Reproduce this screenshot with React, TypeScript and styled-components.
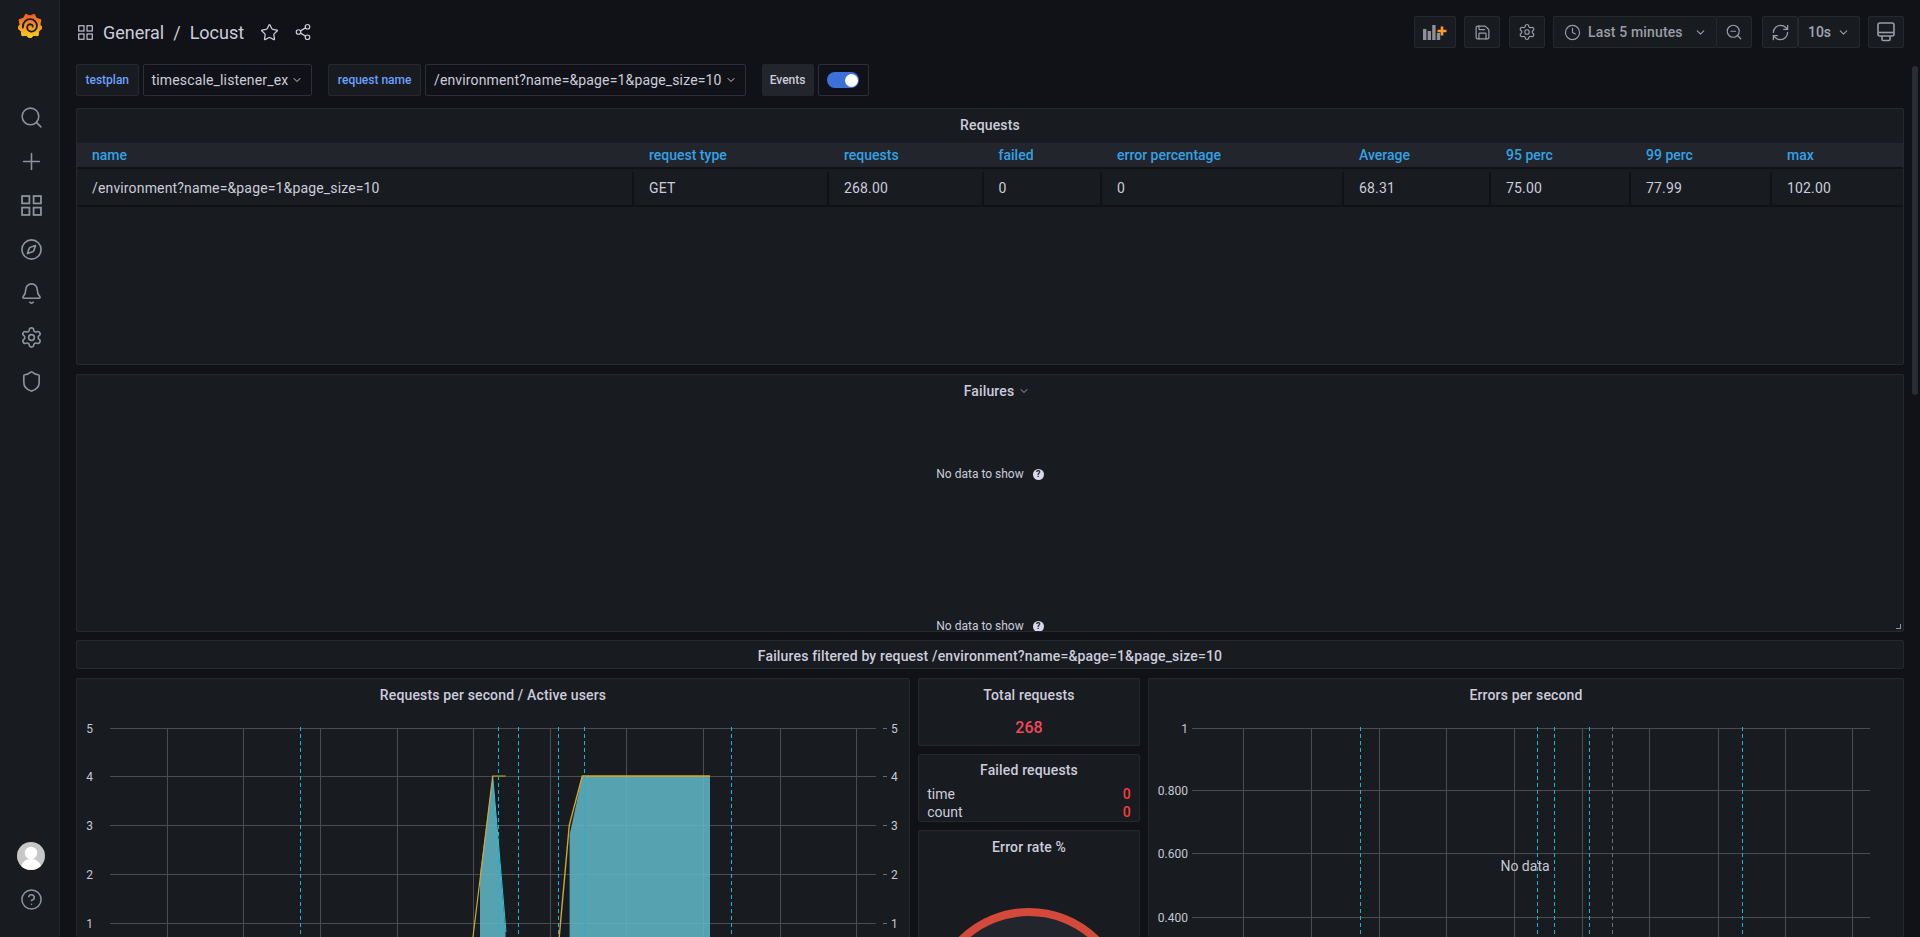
import React from "react";
import styled, { createGlobalStyle } from "styled-components";
import {
  Search, Plus, Compass, Bell, Settings, Shield, CircleHelp, Star, Share2,
  Clock, ZoomOut, RefreshCw, Save, ChevronDown,
} from "lucide-react";

const Global = createGlobalStyle`
  html, body { margin: 0; height: 100%; overflow: hidden; background: #111217; }
  body { font-family: Roboto, "Liberation Sans", sans-serif; color: #ccccdc; font-size: 14px; }
  #root { height: 100%; }
`;

const Shell = styled.div`
  position: relative; display: flex; height: 937px; overflow: hidden; background: #111217;
`;
const Sidebar = styled.nav`
  width: 60px; flex: none; box-sizing: border-box; background: #181b1f;
  border-right: 1px solid #25282d; display: flex; flex-direction: column; align-items: center;
  padding-left: 3px; color: #8e939b;
`;
const LogoSlot = styled.div`
  height: 95px; padding-top: 12px; margin-left: -2px; box-sizing: border-box; display: flex; justify-content: center;
`;
const NavIcons = styled.div`
  display: flex; flex-direction: column; align-items: center;
`;
const NavItem = styled.div`
  height: 44px; width: 44px; display: flex; align-items: center; justify-content: center;
`;
const Spacer = styled.div` flex: 1; `;
const Avatar = styled.div`
  width: 28px; height: 28px; border-radius: 50%; background: #c7c7c7; overflow: hidden; margin-bottom: 17px;
`;
const HelpSlot = styled.div`
  height: 24px; margin-bottom: 26px; display: flex; align-items: center;
`;
const Main = styled.main`
  flex: 1; min-width: 0; box-sizing: border-box; padding: 16px 16px 0; display: flex; flex-direction: column;
`;
const TopBar = styled.header`
  height: 32px; flex: none; display: flex; align-items: center; justify-content: space-between; margin-bottom: 16px;
`;
const Crumbs = styled.div`
  display: flex; align-items: center; padding-left: 2px; font-size: 18px; color: #ccccdc;
`;
const CrumbIcon = styled.span`
  display: flex; margin-right: 10px; color: #ccccdc;
`;
const CrumbSlash = styled.span` margin: 0 9px; `;
const TitleAction = styled.span`
  display: flex; margin-left: 16px; color: #ccccdc;
  & + & { margin-left: 15px; }
`;
const Toolbar = styled.div` display: flex; align-items: center; `;
const ToolButton = styled.div<{ $w: number; $gap?: number }>`
  width: ${p => p.$w}px; margin-left: ${p => p.$gap ?? 9}px; height: 32px; box-sizing: border-box;
  background: #181b1f; border: 1px solid #25282d; border-radius: 2px; color: #9a9da6;
  display: flex; align-items: center; justify-content: center; font-weight: 500; font-size: 14px;
`;
const TimeButton = styled(ToolButton)`
  justify-content: flex-start; padding-left: 10px; border-right: none; border-radius: 2px 0 0 2px;
`;
const TimeLabel = styled.span` margin: 0 11px 0 7px; letter-spacing: .15px; `;
const RefreshLabel = styled.span` color: #9fa7b3; margin-right: 6px; font-size: 14px; `;
const VarRow = styled.div`
  height: 32px; flex: none; display: flex; align-items: stretch; margin-bottom: 12px;
`;
const VarLabel = styled.div`
  box-sizing: border-box; padding: 0 8.5px; margin-left: 16px; display: flex; align-items: center;
  background: #181b1f; border: 1px solid #25282d; border-radius: 2px; color: #6e9fff;
  font-size: 12px; font-weight: 500; margin-right: 4px;
  &:first-child { margin-left: 0; }
`;
const VarSelect = styled.div`
  box-sizing: border-box; padding: 0 8px; display: flex; align-items: center; gap: 3px; letter-spacing: .15px;
  background: #111217; border: 1px solid #2c2f35; border-radius: 2px; color: #ccccdc; font-size: 14px;
`;
const EventsLabel = styled.div`
  width: 52px; margin-left: 16px; margin-right: 4px; display: flex; align-items: center; justify-content: center;
  background: #22252b; border-radius: 2px; font-size: 12px; font-weight: 500; color: #ccccdc;
`;
const SwitchBox = styled.div`
  width: 51px; box-sizing: border-box; border: 1px solid #2c2f35; border-radius: 2px;
  display: flex; align-items: center; justify-content: center;
`;
const Track = styled.div`
  width: 32px; height: 16px; border-radius: 8px; background: #3d71d9; display: flex; align-items: center;
  justify-content: flex-end; padding-right: 1px; box-sizing: border-box;
`;
const Knob = styled.div` width: 13px; height: 13px; border-radius: 50%; background: #fff; `;
const Panel = styled.section<{ $h?: number; $mb?: number }>`
  position: relative; box-sizing: border-box; background: #181b1f; border: 1px solid #25282d; border-radius: 2px;
  ${p => (p.$h ? `height: ${p.$h}px;` : "")}
  ${p => (p.$mb ? `margin-bottom: ${p.$mb}px;` : "")}
  display: flex; flex-direction: column; overflow: hidden; flex: none;
`;
const PanelTitle = styled.h2<{ $h?: number; $shift?: number; $drop?: number }>`
  margin: 0; height: ${p => p.$h ?? 31}px; flex: none; display: flex; align-items: center; justify-content: center;
  gap: 4px; font-size: 14px; font-weight: 500; color: #ccccdc; letter-spacing: .15px; box-sizing: border-box;
  padding-left: ${p => p.$shift ?? 0}px; padding-bottom: ${p => p.$drop ?? 0}px;
`;
const columns = "557px 195px 154.5px 118.5px 242px 147px 140px 141px 131px";
const TableHead = styled.div`
  display: grid; grid-template-columns: ${columns}; height: 24px; flex: none; background: #22252b;
  border-bottom: 2px solid #111217; box-sizing: content-box;
`;
const HeadCell = styled.div`
  padding-left: 15px; display: flex; align-items: center; color: #33a2e5; font-size: 14px; font-weight: 500;
`;
const TableRow = styled.div`
  display: grid; grid-template-columns: ${columns}; height: 33px; padding-top: 3px; flex: none;
  border-bottom: 2px solid #111217; box-sizing: content-box;
`;
const Cell = styled.div`
  padding-left: 15px; display: flex; align-items: center; font-size: 14px; color: #ccccdc; letter-spacing: .15px;
  border-right: 2px solid #111217; padding-bottom: 1px;
  &:last-child { border-right: none; }
`;
const NoData = styled.div`
  display: flex; align-items: center; justify-content: center; gap: 9px; font-size: 12px; line-height: 10px;
  color: #ccccdc; height: 10px;
`;
const NoDataBody = styled.div` padding-top: 63px; flex: 1; `;
const HelpDot = styled.span`
  width: 11px; height: 11px; border-radius: 50%; background: #d8d9e6; color: #181b1f; font-size: 9px;
  font-weight: 700; display: flex; align-items: center; justify-content: center; line-height: 11px;
`;
const ResizeHandle = styled.span`
  position: absolute; right: 2px; bottom: 2px; width: 4px; height: 4px;
  border-right: 1px solid #8e939b; border-bottom: 1px solid #8e939b;
`;
const PanelGrid = styled.div`
  display: grid; grid-template-columns: 834px 221.5px 756px; column-gap: 8.25px; height: 420px; flex: none;
`;
const Stack = styled.div`
  display: flex; flex-direction: column; gap: 8px;
`;
const StatValue = styled.div`
  text-align: center; font-size: 16px; font-weight: 500; color: #f2495c; line-height: 20px; margin-top: 8px;
`;
const TableStat = styled.div`
  display: flex; justify-content: space-between; padding: 0 8px; height: 19px; align-items: center;
  font-size: 14px; color: #ccccdc;
`;
const StatZero = styled.span` color: #f53e3e; font-weight: 500; `;
const Plot = styled.svg` display: block; flex: none; `;
const AxisText = styled.text`
  font-family: Roboto, "Liberation Sans", sans-serif; font-size: 12px; fill: #c7c8d4;
`;
const NoDataText = styled.text`
  font-family: Roboto, "Liberation Sans", sans-serif; font-size: 14px; fill: #c7c8d4;
`;
const Scrollbar = styled.div`
  position: absolute; top: 66px; right: 2px; width: 6px; height: 329px; border-radius: 3px; background: #2a2d33;
`;

const Logo = () => {
  const pts: string[] = [];
  const n = 9;
  for (let i = 0; i < n * 2; i++) {
    const a = (i / (n * 2)) * Math.PI * 2 - Math.PI / 2 - 0.35;
    const r = i % 2 === 0 ? 12.6 : 10.1;
    pts.push(`${(12 + r * Math.cos(a)).toFixed(2)},${(14 + r * Math.sin(a)).toFixed(2)}`);
  }
  return (
    <svg width="24" height="26" viewBox="0 0 24 26" aria-label="Grafana">
      <defs>
        <linearGradient id="g-logo" x1="0" y1="1" x2="0" y2="0">
          <stop offset="0" stopColor="#fcd21d" />
          <stop offset="1" stopColor="#f05a28" />
        </linearGradient>
      </defs>
      <polygon points={pts.join(" ")} fill="url(#g-logo)" stroke="url(#g-logo)" strokeWidth="1" strokeLinejoin="round" />
      <path
        d="M4.8 15.5 C4.5 10.5 8.2 7 12.4 7.2 C16.6 7.4 19.4 10.8 18.9 14.6 C18.5 17.8 15.8 19.9 13 19.6 C10.5 19.3 8.9 17.2 9.2 15 C9.5 13.1 11.1 12 12.8 12.3 C14.1 12.5 14.9 13.6 14.7 14.7"
        fill="none" stroke="#181b1f" strokeWidth="1.8" strokeLinecap="round"
      />
    </svg>
  );
};

const GridIcon = ({ size, sw = 1.6 }: { size: number; sw?: number }) => (
  <svg width={size} height={size} viewBox="0 0 20 20" fill="none" stroke="currentColor" strokeWidth={sw}>
    <rect x="1" y="1" width="7" height="7" />
    <rect x="12" y="1" width="7" height="7" />
    <rect x="1" y="12" width="7" height="7" />
    <rect x="12" y="12" width="7" height="7" />
  </svg>
);

const AddPanelIcon = () => (
  <svg width="24" height="16" viewBox="0 0 24 16">
    <g fill="#8e8f97">
      <rect x="0" y="5" width="3.4" height="11" />
      <rect x="4.6" y="7" width="3.4" height="9" />
      <rect x="9.2" y="1" width="3.4" height="15" />
      <rect x="13.8" y="9" width="3.4" height="7" />
    </g>
    <path d="M14.5 7h9M19 2.5v9" stroke="#ff9830" strokeWidth="2.6" />
  </svg>
);

const TvIcon = () => (
  <svg width="18" height="20" viewBox="0 0 18 20" fill="none" stroke="currentColor" strokeWidth="1.6">
    <rect x="1" y="1" width="16" height="13" rx="2" />
    <path d="M1.5 10.5h15" />
    <path d="M5 14v3.5a1 1 0 0 0 1 1h6a1 1 0 0 0 1-1V14" />
  </svg>
);

const Avatarface = () => (
  <svg width="28" height="28" viewBox="0 0 28 28">
    <circle cx="14" cy="11" r="6.2" fill="#fff" />
    <path d="M3 28c1-8 6-11 11-11s10 3 11 11z" fill="#fff" />
  </svg>
);

type HLine = { y: number; label: string };
type ChartProps = {
  x0: number; y0: number; w: number; h: number; left: number; right: number; labelX: number;
  rows: HLine[]; verticals: number[]; cyan: number[]; gray: number[]; rightAxis?: boolean; children?: React.ReactNode;
};

const Chart = ({ x0, y0, w, h, left, right, labelX, rows, verticals, cyan, gray, rightAxis, children }: ChartProps) => (
  <Plot width={w} height={h} viewBox={`${x0} ${y0} ${w} ${h}`}>
    {verticals.map(x => (
      <line key={x} x1={x + 0.5} x2={x + 0.5} y1={728} y2={1100} stroke="#4a4c50" strokeWidth="1" />
    ))}
    {rows.map(r => (
      <g key={r.label}>
        <line x1={left} x2={right} y1={r.y + 0.5} y2={r.y + 0.5} stroke="#4a4c50" strokeWidth="1" />
        <AxisText x={labelX} y={r.y + 4.5} textAnchor="end">{r.label}</AxisText>
        {rightAxis && (
          <>
            <line x1={883} x2={887} y1={r.y + 0.5} y2={r.y + 0.5} stroke="#6a6c72" strokeWidth="1" />
            <AxisText x={891} y={r.y + 4.5}>{r.label}</AxisText>
          </>
        )}
      </g>
    ))}
    {children}
    {gray.map(x => (
      <line key={x} x1={x + 0.5} x2={x + 0.5} y1={727} y2={1100} stroke="#6c6e74" strokeDasharray="4 3" />
    ))}
    {cyan.map(x => (
      <line key={x} x1={x + 0.5} x2={x + 0.5} y1={727} y2={1100} stroke="#12b6d6" strokeDasharray="4 3" />
    ))}
  </Plot>
);

const rpsRows: HLine[] = [
  { y: 728, label: "5" }, { y: 776, label: "4" }, { y: 825, label: "3" }, { y: 874, label: "2" }, { y: 923, label: "1" },
];
const errRows: HLine[] = [
  { y: 728, label: "1" }, { y: 790, label: "0.800" }, { y: 853, label: "0.600" }, { y: 917, label: "0.400" },
];

const heads = ["name", "request type", "requests", "failed", "error percentage", "Average", "95 perc", "99 perc", "max"];
const cells = ["/environment?name=&page=1&page_size=10", "GET", "268.00", "0", "0", "68.31", "75.00", "77.99", "102.00"];

export default function App() {
  return (
    <Shell>
      <Global />
      <Sidebar>
        <LogoSlot><Logo /></LogoSlot>
        <NavIcons>
          <NavItem><Search size={25} strokeWidth={1.5} /></NavItem>
          <NavItem><Plus size={27} strokeWidth={1.4} /></NavItem>
          <NavItem><GridIcon size={21} sw={1.7} /></NavItem>
          <NavItem><Compass size={23} strokeWidth={1.7} /></NavItem>
          <NavItem><Bell size={23} strokeWidth={1.7} /></NavItem>
          <NavItem><Settings size={23} strokeWidth={1.7} /></NavItem>
          <NavItem><Shield size={23} strokeWidth={1.7} /></NavItem>
        </NavIcons>
        <Spacer />
        <Avatar><Avatarface /></Avatar>
        <HelpSlot><CircleHelp size={23} strokeWidth={1.6} /></HelpSlot>
      </Sidebar>
      <Main>
        <TopBar>
          <Crumbs>
            <CrumbIcon><GridIcon size={15} sw={1.5} /></CrumbIcon>
            General<CrumbSlash>/</CrumbSlash>Locust
            <TitleAction><Star size={19} strokeWidth={1.6} /></TitleAction>
            <TitleAction><Share2 size={18} strokeWidth={1.6} /></TitleAction>
          </Crumbs>
          <Toolbar>
            <ToolButton $w={42}><AddPanelIcon /></ToolButton>
            <ToolButton $w={36} $gap={8}><Save size={17} strokeWidth={1.7} /></ToolButton>
            <ToolButton $w={36}><Settings size={18} strokeWidth={1.6} /></ToolButton>
            <TimeButton $w={163} $gap={8}>
              <Clock size={17} strokeWidth={1.6} />
              <TimeLabel>Last 5 minutes</TimeLabel>
              <ChevronDown size={13} strokeWidth={2} />
            </TimeButton>
            <ToolButton $w={36} $gap={0}><ZoomOut size={18} strokeWidth={1.6} /></ToolButton>
            <ToolButton $w={36} $gap={10}><RefreshCw size={19} strokeWidth={1.6} /></ToolButton>
            <ToolButton $w={62} $gap={0}>
              <RefreshLabel>10s</RefreshLabel>
              <ChevronDown size={13} strokeWidth={2} />
            </ToolButton>
            <ToolButton $w={36} $gap={8}><TvIcon /></ToolButton>
          </Toolbar>
        </TopBar>
        <VarRow>
          <VarLabel>testplan</VarLabel>
          <VarSelect>timescale_listener_ex <ChevronDown size={12} strokeWidth={2} /></VarSelect>
          <VarLabel>request name</VarLabel>
          <VarSelect>/environment?name=&amp;page=1&amp;page_size=10 <ChevronDown size={12} strokeWidth={2} /></VarSelect>
          <EventsLabel>Events</EventsLabel>
          <SwitchBox><Track><Knob /></Track></SwitchBox>
        </VarRow>
        <Panel $h={257} $mb={9}>
          <PanelTitle $h={34} $drop={3}>Requests</PanelTitle>
          <TableHead>
            {heads.map(h => <HeadCell key={h}>{h}</HeadCell>)}
          </TableHead>
          <TableRow>
            {cells.map((c, i) => <Cell key={i}>{c}</Cell>)}
          </TableRow>
        </Panel>
        <Panel $h={258} $mb={8}>
          <PanelTitle $shift={14}>Failures <ChevronDown size={12} strokeWidth={1.5} /></PanelTitle>
          <NoDataBody>
            <NoData>No data to show <HelpDot>?</HelpDot></NoData>
          </NoDataBody>
          <NoData>No data to show <HelpDot>?</HelpDot></NoData>
          <ResizeHandle />
        </Panel>
        <Panel $h={29} $mb={9}>
          <PanelTitle $h={29}>Failures filtered by request /environment?name=&amp;page=1&amp;page_size=10</PanelTitle>
        </Panel>
        <PanelGrid>
          <Panel>
            <PanelTitle>Requests per second / Active users</PanelTitle>
            <Plot as={Chart} x0={77} y0={710} w={832} h={400} left={110} right={876} labelX={93}
              rows={rpsRows}
              verticals={[167, 243, 320, 397, 473, 550, 626, 703, 780, 856]}
              cyan={[300, 498, 518, 558, 584, 731]} gray={[]} rightAxis>
              <polygon points="480,874 492.7,776 505.5,932 505.5,1100 480,1100" fill="#62b9c8" fillOpacity="0.86" />
              <polyline points="492.7,776 506,932" fill="none" stroke="#2fc5dd" strokeWidth="1" />
              <polygon points="569.6,835 582.3,776 710,776 710,1100 569.6,1100" fill="#62b9c8" fillOpacity="0.86" />
              <polyline points="472,945 492.7,776 505.7,776" fill="none" stroke="#d6a72c" strokeWidth="1.2" />
              <polyline points="558.5,945 569.3,825 582.3,776 710,776" fill="none" stroke="#d6a72c" strokeWidth="1.4" />
            </Plot>
          </Panel>
          <Stack>
            <Panel $h={68}>
              <PanelTitle>Total requests</PanelTitle>
              <StatValue>268</StatValue>
            </Panel>
            <Panel $h={68}>
              <PanelTitle $h={30}>Failed requests</PanelTitle>
              <TableStat>time <StatZero>0</StatZero></TableStat>
              <TableStat>count <StatZero>0</StatZero></TableStat>
            </Panel>
            <Panel $h={300}>
              <PanelTitle>Error rate %</PanelTitle>
              <Plot width={219} height={260} viewBox="919 862 219 260">
                <circle cx="1029" cy="1008" r="96" fill="#22252b" stroke="#d44a3a" strokeWidth="8" />
              </Plot>
            </Panel>
          </Stack>
          <Panel>
            <PanelTitle>Errors per second</PanelTitle>
            <Plot as={Chart} x0={1149} y0={710} w={754} h={400} left={1192} right={1870} labelX={1188}
              rows={errRows}
              verticals={[1243, 1311, 1379, 1446, 1514, 1582, 1649, 1718, 1785, 1852]}
              cyan={[1360, 1537, 1554, 1589, 1742]} gray={[1612]}>
              <NoDataText x={1525} y={871} textAnchor="middle">No data</NoDataText>
            </Plot>
          </Panel>
        </PanelGrid>
      </Main>
      <Scrollbar />
    </Shell>
  );
}
